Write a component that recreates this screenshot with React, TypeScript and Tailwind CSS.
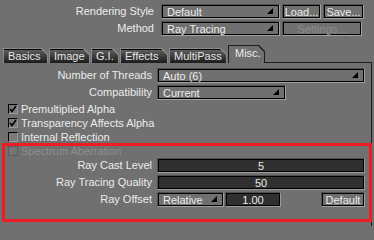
import React from "react";

const font = { fontFamily: '"Liberation Sans", Arial, sans-serif' };

function Tri() {
  return (
    <svg width="6" height="6" viewBox="0 0 6 6" className="absolute right-[5px] bottom-[3px]">
      <polygon points="6,0 6,6 0,6" fill="#000" />
    </svg>
  );
}

function Dropdown({ text, w }: { text: string; w: string }) {
  return (
    <div className={`${w} h-[15px] border border-[#a0a0a0] border-t-[#505050] border-l-[#505050]`}>
      <div className="relative w-full h-full border border-black bg-[#707070] text-[#ececec] text-[11px] leading-[11px] pl-[4px] pt-[1px] whitespace-nowrap">
        {text}
        <Tri />
      </div>
    </div>
  );
}

function Button({ text, w, disabled }: { text: string; w: string; disabled?: boolean }) {
  return (
    <div className={`${w} h-[15px] border border-[#a0a0a0] border-t-[#505050] border-l-[#505050]`}>
      <div
        className={`w-full h-full border border-black bg-[#707070] text-[11px] leading-[11px] pt-[1px] text-center whitespace-nowrap ${
          disabled ? "text-[#8c8c8c]" : "text-[#ececec]"
        }`}
      >
        {text}
      </div>
    </div>
  );
}

function Field({ text, w }: { text: string; w: string }) {
  return (
    <div className={`${w} h-[15px] border border-[#9a9a9a] border-t-[#505050] border-l-[#505050]`}>
      <div className="w-full h-full border border-black bg-[#303030] text-[#ececec] text-[11px] leading-[11px] pt-[1px] text-center">
        {text}
      </div>
    </div>
  );
}

function Check({ label, checked, disabled }: { label: string; checked?: boolean; disabled?: boolean }) {
  return (
    <div className="h-[14px] flex items-center pl-[8px] gap-[3px]">
      <div
        className={`w-[10px] h-[10px] border flex items-center justify-center ${
          disabled ? "border-[#5a5a5a] bg-[#767676]" : "border-black border-r-[#9a9a9a] border-b-[#9a9a9a] bg-[#7a7a7a]"
        }`}
      >
        {checked && (
          <svg width="8" height="8" viewBox="0 0 8 8">
            <polyline points="1,4 3,6.5 7,1" fill="none" stroke="#000" strokeWidth="1.6" />
          </svg>
        )}
      </div>
      <span className={`text-[11px] leading-[11px] ${disabled ? "text-[#8e8e8e]" : "text-[#ececec]"}`}>{label}</span>
    </div>
  );
}

function Tab({ label, w, active }: { label: string; w: string; active?: boolean }) {
  const clip = { clipPath: "polygon(0 0, calc(100% - 6px) 0, 100% 6px, 100% 100%, 0 100%)" };
  if (active) {
    return (
      <div className={`${w} h-[18px] bg-[#1e1e1e] pl-px pt-px pr-px`} style={clip}>
        <div
          className="w-full h-full bg-[#707070] text-[#ececec] text-[11px] leading-[11px] pl-[6px] pt-[2px]"
          style={clip}
        >
          {label}
        </div>
      </div>
    );
  }
  return (
    <div className={`${w} h-[15px] bg-[#8a8a8a] pl-px pt-px pr-px`} style={clip}>
      <div
        className="w-full h-full bg-gradient-to-b from-[#5e5e5e] to-[#1c1c1c] border-t border-black text-[#e6e6e6] text-[11px] leading-[11px] pl-[4px] pt-px"
        style={clip}
      >
        {label}
      </div>
    </div>
  );
}

export default function App() {
  return (
    <div className="relative w-[374px] h-[240px] bg-[#707070] overflow-hidden" style={font}>
      <div className="flex flex-col gap-[2px] pt-[4px]">
        <div className="flex items-center h-[15px]">
          <div className="w-[155px] text-right text-[11px] text-[#ececec] pr-px">Rendering Style</div>
          <div className="ml-[6px] flex gap-[2px]">
            <Dropdown text="Default" w="w-[119px]" />
            <Button text="Load..." w="w-[39px]" />
            <Button text="Save..." w="w-[41px]" />
          </div>
        </div>
        <div className="flex items-center h-[15px]">
          <div className="w-[155px] text-right text-[11px] text-[#ececec] pr-px">Method</div>
          <div className="ml-[6px] flex gap-[2px]">
            <Dropdown text="Ray Tracing" w="w-[119px]" />
            <Button text="Settings..." w="w-[80px]" disabled />
          </div>
        </div>
      </div>

      <div className="flex items-end mt-[9px] pl-[3px] h-[18px]">
        <div className="flex gap-[1px] items-end">
          <Tab label="Basics" w="w-[45px]" />
          <Tab label="Image" w="w-[41px]" />
          <Tab label="G.I." w="w-[28px]" />
          <Tab label="Effects" w="w-[48px]" />
          <Tab label="MultiPass" w="w-[58px]" />
        </div>
        <div className="ml-[1px]">
          <Tab label="Misc." w="w-[37px]" active />
        </div>
        <div className="w-[107px] h-px bg-[#1e1e1e]" />
      </div>

      <div className="w-[372px] h-[163px] border-r border-[#1e1e1e] flex flex-col pt-[5px]">
        <div className="flex items-center h-[15px]">
          <div className="w-[152px] text-right text-[11px] text-[#ececec]">Number of Threads</div>
          <div className="ml-[5px]">
            <Dropdown text="Auto (6)" w="w-[208px]" />
          </div>
        </div>
        <div className="flex items-center h-[15px] mt-[2px]">
          <div className="w-[152px] text-right text-[11px] text-[#ececec]">Compatibility</div>
          <div className="ml-[5px]">
            <Dropdown text="Current" w="w-[129px]" />
          </div>
        </div>
        <div className="flex flex-col mt-[2px]">
          <Check label="Premultiplied Alpha" checked />
          <Check label="Transparency Affects Alpha" checked />
          <Check label="Internal Reflection" />
          <Check label="Spectrum Aberration" disabled />
        </div>
        <div className="flex items-center h-[15px]">
          <div className="w-[152px] text-right text-[11px] text-[#ececec]">Ray Cast Level</div>
          <div className="ml-[5px]">
            <Field text="5" w="w-[208px]" />
          </div>
        </div>
        <div className="flex items-center h-[15px] mt-[2px]">
          <div className="w-[152px] text-right text-[11px] text-[#ececec]">Ray Tracing Quality</div>
          <div className="ml-[5px]">
            <Field text="50" w="w-[208px]" />
          </div>
        </div>
        <div className="flex items-center h-[15px] mt-[2px]">
          <div className="w-[152px] text-right text-[11px] text-[#ececec]">Ray Offset</div>
          <div className="ml-[5px] flex">
            <Dropdown text="Relative" w="w-[67px]" />
            <div className="ml-[1px]">
              <Field text="1.00" w="w-[56px]" />
            </div>
            <div className="ml-[40px]">
              <Button text="Default" w="w-[44px]" />
            </div>
          </div>
        </div>
      </div>

      <div className="absolute left-[2px] top-[143px] w-[370px] h-[79px] border-[3px] border-[#ee1c24]" />
    </div>
  );
}
